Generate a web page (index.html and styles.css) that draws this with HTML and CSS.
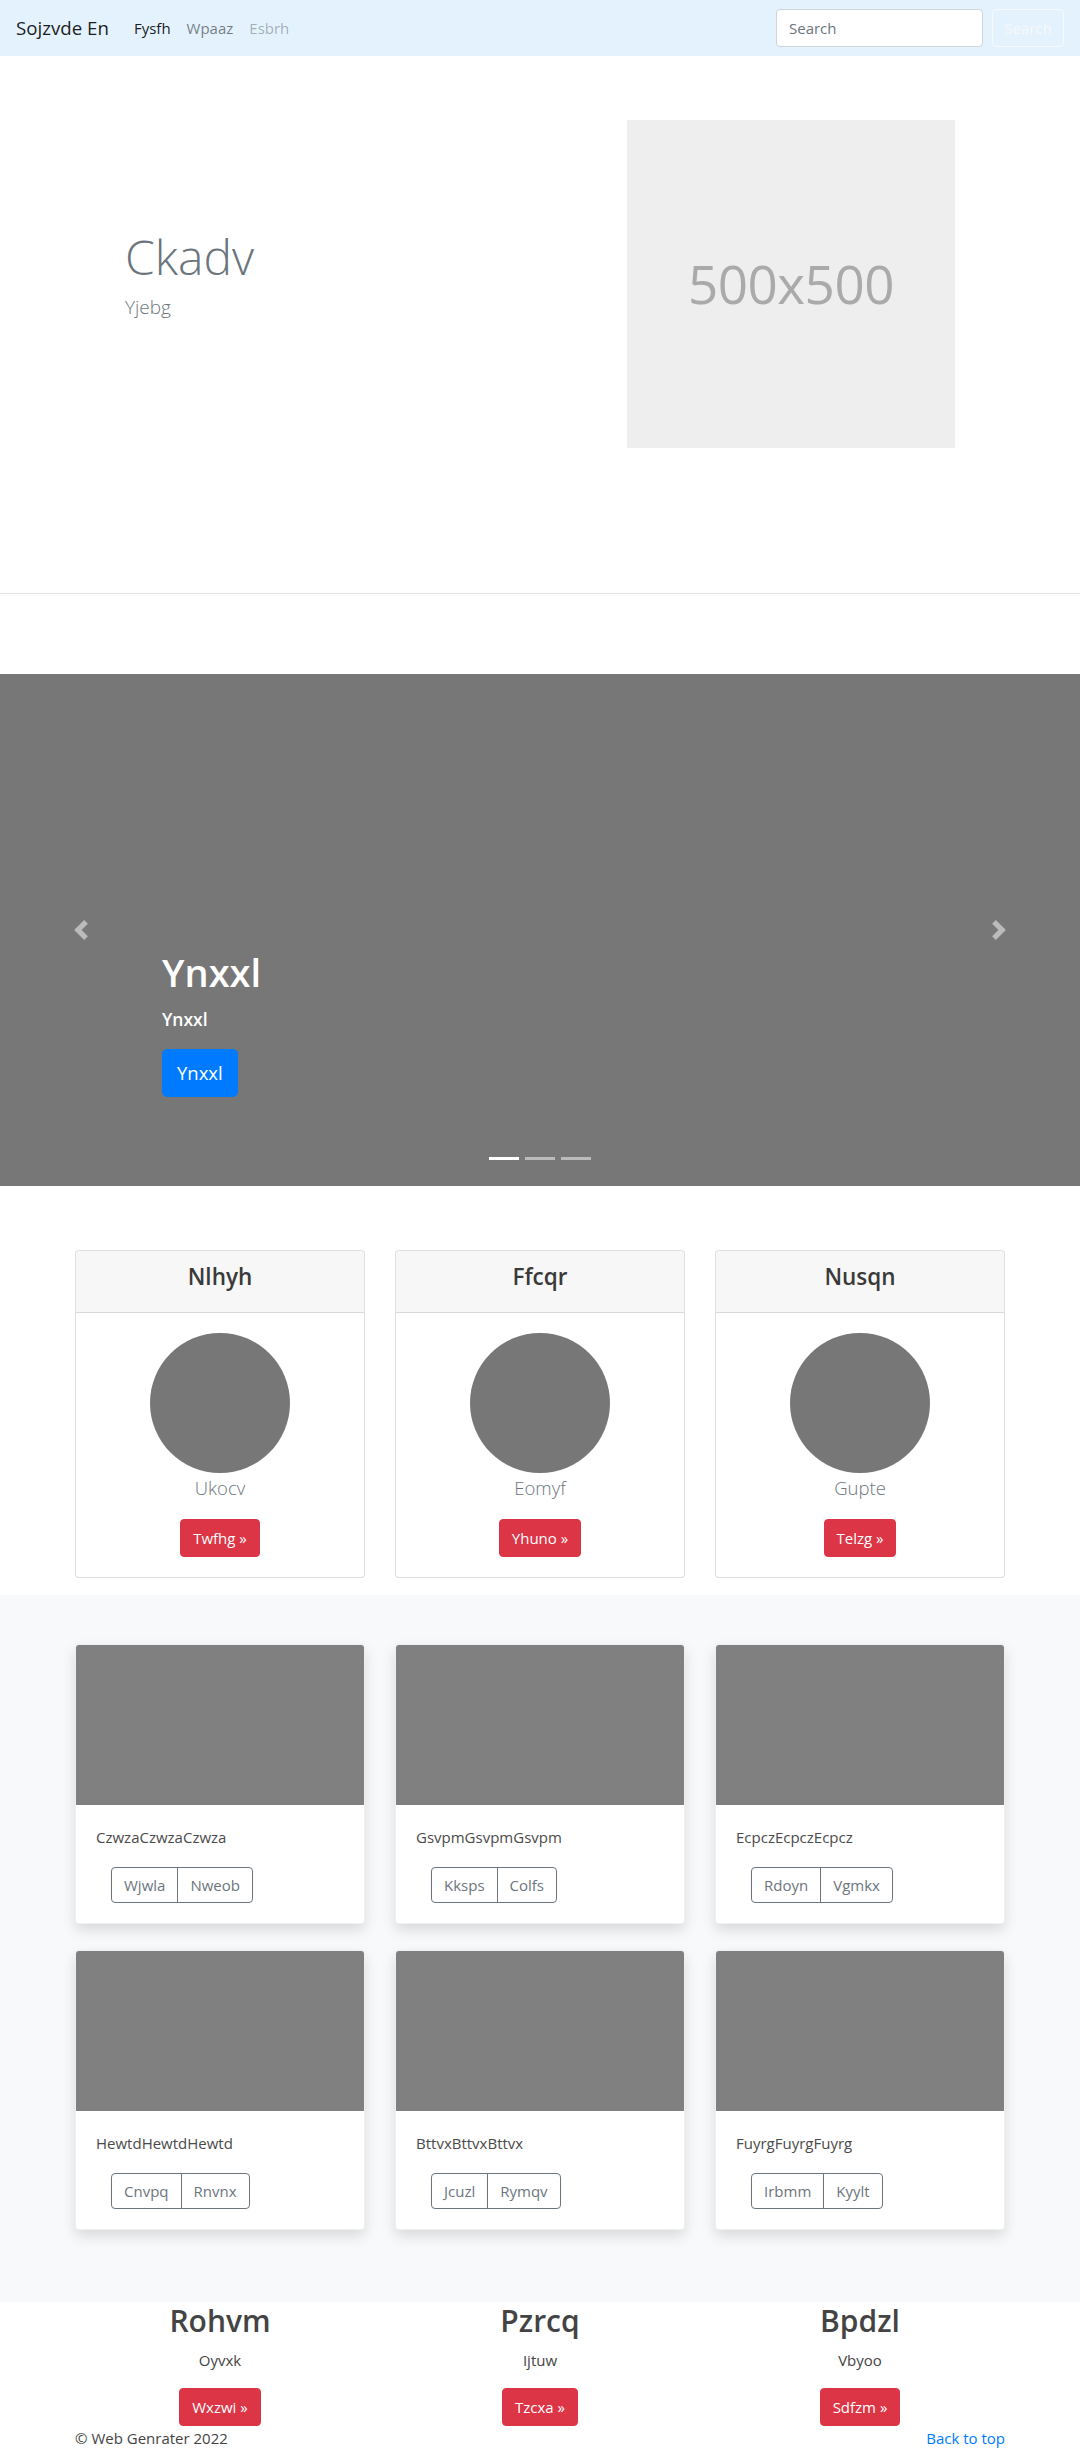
FILE: index.html
```html
<!DOCTYPE html>
<html lang="en">
<head>
<meta charset="utf-8">
<title>Sojzvde En</title>
<link rel="stylesheet" href="styles.css">
</head>
<body>
<nav class="navbar">
  <a class="brand" href="#">Sojzvde En</a>
  <ul class="nav-links">
    <li><a class="nav-link active" href="#">Fysfh</a></li>
    <li><a class="nav-link" href="#">Wpaaz</a></li>
    <li><a class="nav-link disabled" href="#">Esbrh</a></li>
  </ul>
  <form class="search-form">
    <input class="search-input" type="text" placeholder="Search">
    <button class="btn-outline-light" type="button">Search</button>
  </form>
</nav>

<section class="hero">
  <div class="hero-text">
    <h1 class="hero-title">Ckadv</h1>
    <p class="hero-lead">Yjebg</p>
  </div>
  <div class="hero-img">500x500</div>
</section>

<div class="carousel">
  <a class="carousel-control prev" href="#">
    <svg width="20" height="20" viewBox="0 0 8 8"><path fill="#fff" d="M5.25 0l-4 4 4 4 1.5-1.5L4.25 4l2.5-2.5L5.25 0z"/></svg>
  </a>
  <a class="carousel-control next" href="#">
    <svg width="20" height="20" viewBox="0 0 8 8"><path fill="#fff" d="M2.75 0l-1.5 1.5L3.75 4l-2.5 2.5L2.75 8l4-4-4-4z"/></svg>
  </a>
  <div class="carousel-caption">
    <h1 class="caption-title">Ynxxl</h1>
    <p class="caption-sub">Ynxxl</p>
    <p class="caption-btn-wrap"><a class="btn btn-lg btn-primary" href="#">Ynxxl</a></p>
  </div>
  <ol class="indicators">
    <li class="ind active"></li>
    <li class="ind"></li>
    <li class="ind"></li>
  </ol>
</div>

<section class="pricing">
  <div class="grid3">
    <div class="pcard">
      <div class="pcard-header"><h4 class="pcard-title">Nlhyh</h4></div>
      <div class="pcard-body">
        <div class="circle"></div>
        <p class="pcard-lead">Ukocv</p>
        <a class="btn btn-danger" href="#">Twfhg »</a>
      </div>
    </div>
    <div class="pcard">
      <div class="pcard-header"><h4 class="pcard-title">Ffcqr</h4></div>
      <div class="pcard-body">
        <div class="circle"></div>
        <p class="pcard-lead">Eomyf</p>
        <a class="btn btn-danger" href="#">Yhuno »</a>
      </div>
    </div>
    <div class="pcard">
      <div class="pcard-header"><h4 class="pcard-title">Nusqn</h4></div>
      <div class="pcard-body">
        <div class="circle"></div>
        <p class="pcard-lead">Gupte</p>
        <a class="btn btn-danger" href="#">Telzg »</a>
      </div>
    </div>
  </div>
</section>

<section class="album">
  <div class="grid3 album-grid">
    <div class="acard">
      <div class="acard-img"></div>
      <div class="acard-body">
        <p class="acard-text">CzwzaCzwzaCzwza</p>
        <div class="btn-group"><a class="btn-os" href="#">Wjwla</a><a class="btn-os" href="#">Nweob</a></div>
      </div>
    </div>
    <div class="acard">
      <div class="acard-img"></div>
      <div class="acard-body">
        <p class="acard-text">GsvpmGsvpmGsvpm</p>
        <div class="btn-group"><a class="btn-os" href="#">Kksps</a><a class="btn-os" href="#">Colfs</a></div>
      </div>
    </div>
    <div class="acard">
      <div class="acard-img"></div>
      <div class="acard-body">
        <p class="acard-text">EcpczEcpczEcpcz</p>
        <div class="btn-group"><a class="btn-os" href="#">Rdoyn</a><a class="btn-os" href="#">Vgmkx</a></div>
      </div>
    </div>
    <div class="acard">
      <div class="acard-img"></div>
      <div class="acard-body">
        <p class="acard-text">HewtdHewtdHewtd</p>
        <div class="btn-group"><a class="btn-os" href="#">Cnvpq</a><a class="btn-os" href="#">Rnvnx</a></div>
      </div>
    </div>
    <div class="acard">
      <div class="acard-img"></div>
      <div class="acard-body">
        <p class="acard-text">BttvxBttvxBttvx</p>
        <div class="btn-group"><a class="btn-os" href="#">Jcuzl</a><a class="btn-os" href="#">Rymqv</a></div>
      </div>
    </div>
    <div class="acard">
      <div class="acard-img"></div>
      <div class="acard-body">
        <p class="acard-text">FuyrgFuyrgFuyrg</p>
        <div class="btn-group"><a class="btn-os" href="#">Irbmm</a><a class="btn-os" href="#">Kyylt</a></div>
      </div>
    </div>
  </div>
</section>

<section class="marketing">
  <div class="grid3">
    <div class="mcol">
      <h2 class="mtitle">Rohvm</h2>
      <p class="mtext">Oyvxk</p>
      <a class="btn btn-danger" href="#">Wxzwi »</a>
    </div>
    <div class="mcol">
      <h2 class="mtitle">Pzrcq</h2>
      <p class="mtext">Ijtuw</p>
      <a class="btn btn-danger" href="#">Tzcxa »</a>
    </div>
    <div class="mcol">
      <h2 class="mtitle">Bpdzl</h2>
      <p class="mtext">Vbyoo</p>
      <a class="btn btn-danger" href="#">Sdfzm »</a>
    </div>
  </div>
</section>

<footer class="footer">
  <p class="copy">© Web Genrater 2022</p>
  <a class="totop" href="#">Back to top</a>
</footer>
</body>
</html>
```

FILE: styles.css
```css
* { box-sizing: border-box; }
html, body { margin: 0; padding: 0; }
body {
  font-family: "Open Sans", "Noto Sans", "Liberation Sans", sans-serif;
  font-size: 15px;
  line-height: 24px;
  color: #212529;
  background: #fff;
}
a { text-decoration: none; }

/* navbar */
.navbar {
  height: 56px;
  background: #e3f2fd;
  display: flex;
  align-items: center;
  padding: 0 16px;
}
.brand {
  font-size: 18.7px;
  line-height: 30px;
  color: rgba(0,0,0,.9);
  margin-right: 17px;
}
.nav-links {
  display: flex;
  list-style: none;
  margin: 0;
  padding: 0;
}
.nav-link {
  display: block;
  padding: 8px 8px;
  font-size: 15px;
  color: rgba(0,0,0,.5);
}
.nav-link.active { color: rgba(0,0,0,.9); }
.nav-link.disabled { color: rgba(0,0,0,.3); }
.search-form {
  margin-left: auto;
  display: flex;
  align-items: center;
}
.search-input {
  width: 207px;
  height: 38px;
  padding: 6px 12px;
  font-family: inherit;
  font-size: 15px;
  color: #495057;
  background: #fff;
  border: 1px solid #ced4da;
  border-radius: 4px;
  margin-right: 9px;
  outline: none;
}
.search-input::placeholder { color: #6c757d; }
.btn-outline-light {
  width: 72px;
  height: 38px;
  padding: 6px 10px;
  font-family: inherit;
  font-size: 15px;
  color: #f8f9fa;
  background: transparent;
  border: 1px solid #f8f9fa;
  border-radius: 4px;
}

/* hero */
.hero {
  height: 538px;
  border-bottom: 1px solid #e5e5e5;
  display: flex;
  align-items: flex-start;
  padding-top: 64px;
}
.hero-text {
  width: 627px;
  height: 328px;
  padding-left: 125px;
  display: flex;
  flex-direction: column;
  justify-content: center;
}
.hero-title {
  margin: 0 0 6px;
  font-size: 48px;
  font-weight: 300;
  line-height: 57.6px;
  color: #6c757d;
}
.hero-lead {
  margin: 0 0 18px;
  font-size: 19px;
  font-weight: 300;
  line-height: 30px;
  color: #6c757d;
}
.hero-img {
  width: 328px;
  height: 328px;
  background: #eee;
  color: #aaa;
  font-size: 53px;
  display: flex;
  align-items: center;
  justify-content: center;
  letter-spacing: -0.5px;
}

/* carousel */
.carousel {
  position: relative;
  margin-top: 80px;
  height: 512px;
  background: #777;
}
.carousel-control {
  position: absolute;
  top: 0;
  bottom: 0;
  width: 15%;
  display: flex;
  align-items: center;
  justify-content: center;
  opacity: .5;
}
.carousel-control.prev { left: 0; }
.carousel-control.next { right: 0; }
.carousel-caption {
  position: absolute;
  left: 15%;
  right: 15%;
  bottom: 48px;
  padding: 20px 0;
  color: #fff;
  text-align: left;
}
.caption-title {
  margin: 0 0 10px;
  font-size: 38px;
  font-weight: 600;
  line-height: 48px;
}
.caption-sub {
  margin: 0 0 16px;
  font-size: 17.5px;
  font-weight: 600;
  line-height: 27px;
}
.caption-btn-wrap { margin: 0 0 21px; }
.btn {
  display: inline-block;
  padding: 6px 12px;
  font-size: 15px;
  line-height: 24px;
  border: 1px solid transparent;
  border-radius: 4px;
  color: #fff;
}
.btn-lg {
  padding: 8px 14px;
  font-size: 18.5px;
  line-height: 30px;
  border-radius: 5px;
}
.btn-primary { background: #007bff; border-color: #007bff; }
.btn-danger { background: #dc3545; border-color: #dc3545; }
.indicators {
  position: absolute;
  left: 0;
  right: 0;
  bottom: 26px;
  margin: 0;
  padding: 0;
  list-style: none;
  display: flex;
  justify-content: center;
  gap: 6px;
}
.ind {
  width: 30px;
  height: 3px;
  background: rgba(255,255,255,.5);
}
.ind.active { background: #fff; }

/* grids */
.grid3 {
  width: 930px;
  margin: 0 auto;
  display: grid;
  grid-template-columns: repeat(3, 290px);
  column-gap: 30px;
}

/* pricing */
.pricing {
  padding-top: 64px;
  padding-bottom: 17px;
}
.pcard {
  border: 1px solid rgba(0,0,0,.125);
  border-radius: 4px;
  background: #fff;
  overflow: hidden;
}
.pcard-header {
  background: rgba(0,0,0,.03);
  border-bottom: 1px solid rgba(0,0,0,.125);
  padding: 12px 20px;
  text-align: center;
}
.pcard-title {
  margin: 0 0 8px;
  font-size: 22.5px;
  font-weight: 600;
  line-height: 28.8px;
  color: #3a3a3a;
}
.pcard-body {
  padding: 20px;
  text-align: center;
}
.circle {
  width: 140px;
  height: 140px;
  border-radius: 50%;
  background: #777;
  margin: 0 auto;
}
.pcard-lead {
  margin: 0 0 16px;
  font-size: 18.5px;
  font-weight: 300;
  line-height: 30px;
  color: #6c757d;
}

/* album */
.album {
  background: #f8f9fa;
  padding-top: 49px;
  padding-bottom: 72px;
}
.album-grid { row-gap: 26px; }
.acard {
  background: #fff;
  border: 1px solid rgba(0,0,0,.06);
  border-radius: 4px;
  overflow: hidden;
  box-shadow: 0 6px 14px rgba(0,0,0,.13);
}
.acard-img {
  height: 160px;
  background: #808080;
}
.acard-body { padding: 20px; }
.acard-text {
  margin: 0 0 18px;
  font-size: 15px;
  line-height: 24px;
  color: #4a4a4a;
}
.btn-group {
  display: inline-flex;
  margin-left: 15px;
}
.btn-os {
  display: block;
  padding: 6px 12px;
  font-size: 15px;
  line-height: 22px;
  color: #6c757d;
  border: 1px solid #6c757d;
}
.btn-os:first-child { border-radius: 4px 0 0 4px; }
.btn-os + .btn-os { margin-left: -1px; border-radius: 0 4px 4px 0; }

/* marketing */
.mcol { text-align: center; }
.mtitle {
  margin: 0 0 8px;
  font-size: 30px;
  font-weight: 600;
  line-height: 38.4px;
  color: #444;
}
.mtext {
  margin: 0 0 16px;
  font-size: 15px;
  line-height: 24px;
  color: #444;
}

/* footer */
.footer {
  width: 930px;
  margin: 0 auto;
  display: flex;
  justify-content: space-between;
}
.copy {
  margin: 0;
  font-size: 15px;
  line-height: 24px;
  color: #444;
}
.totop {
  font-size: 15px;
  line-height: 24px;
  color: #007bff;
}
```
